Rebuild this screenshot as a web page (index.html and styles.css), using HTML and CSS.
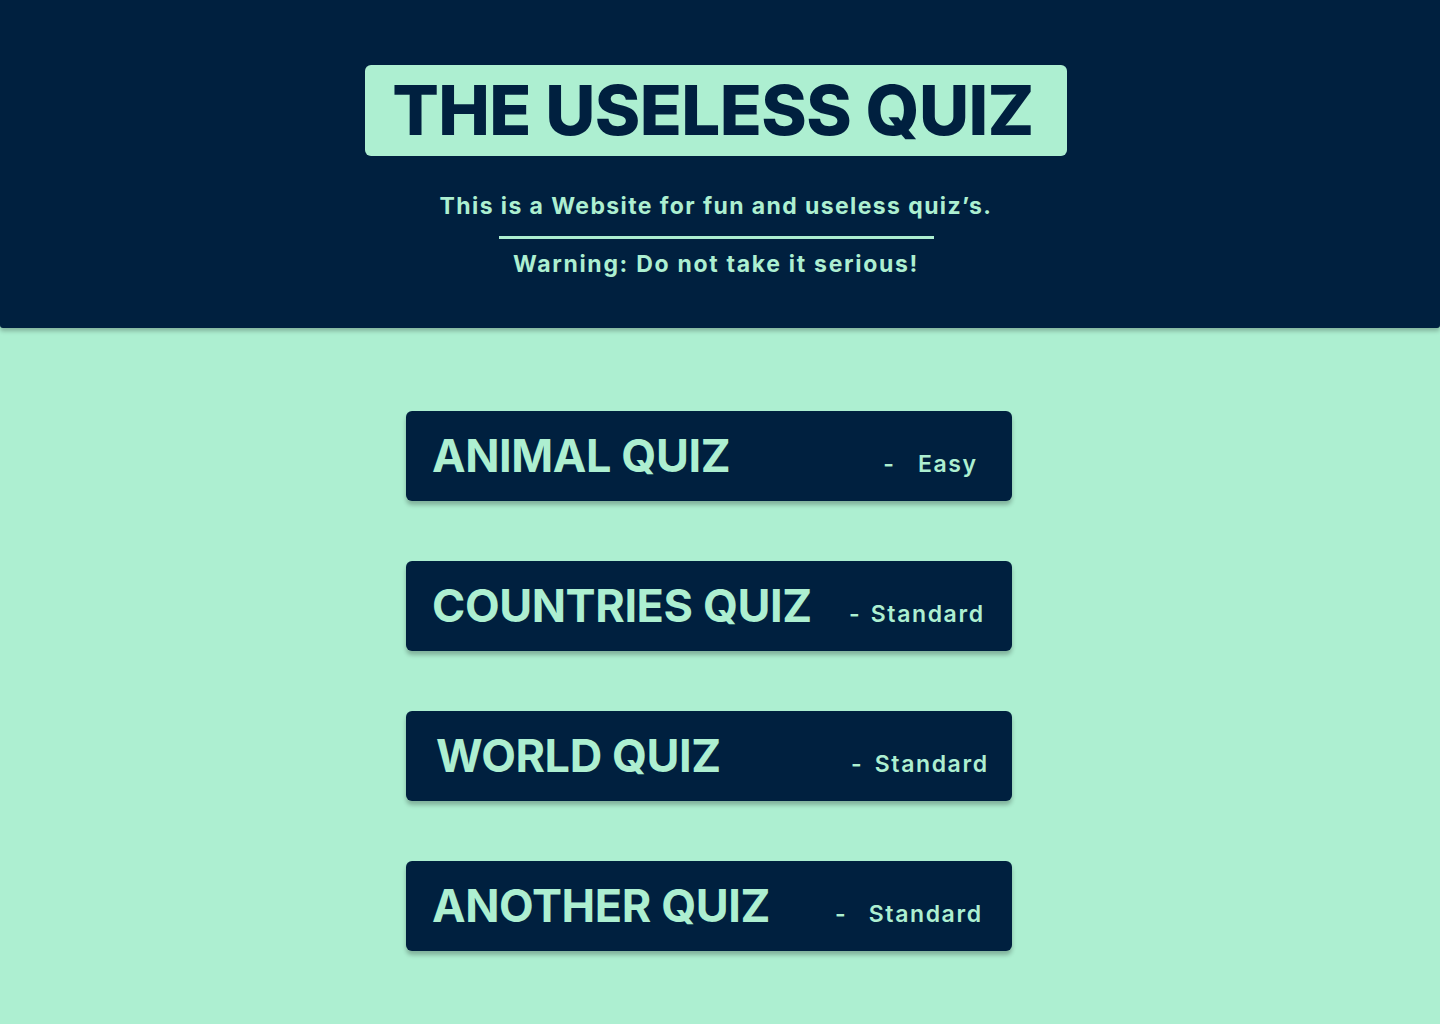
FILE: index.html
```html
<!DOCTYPE html>
<html lang="en">
<head>
<meta charset="utf-8">
<title>The Useless Quiz</title>
<link rel="stylesheet" href="styles.css">
</head>
<body>
<header class="hero">
  <h1 class="hero-title">THE USELESS QUIZ</h1>
  <p class="hero-sub">This is a Website for fun and useless quiz’s.</p>
  <div class="hero-rule"></div>
  <p class="hero-warn">Warning: Do not take it serious!</p>
</header>
<main class="quiz-list">
  <a class="quiz-card quiz-card--animal" href="#">
    <span class="quiz-name">ANIMAL QUIZ</span>
    <span class="quiz-level"><span class="quiz-dash">-</span><span class="quiz-diff">Easy</span></span>
  </a>
  <a class="quiz-card quiz-card--countries" href="#">
    <span class="quiz-name">COUNTRIES QUIZ</span>
    <span class="quiz-level"><span class="quiz-dash">-</span><span class="quiz-diff">Standard</span></span>
  </a>
  <a class="quiz-card quiz-card--world" href="#">
    <span class="quiz-name">WORLD QUIZ</span>
    <span class="quiz-level"><span class="quiz-dash">-</span><span class="quiz-diff">Standard</span></span>
  </a>
  <a class="quiz-card quiz-card--another" href="#">
    <span class="quiz-name">ANOTHER QUIZ</span>
    <span class="quiz-level"><span class="quiz-dash">-</span><span class="quiz-diff">Standard</span></span>
  </a>
</main>
</body>
</html>
```
FILE: styles.css
```css
* { box-sizing: border-box; }

html, body {
  margin: 0;
  padding: 0;
}

body {
  background: #adefd1;
  font-family: "Inter", "Open Sans", sans-serif;
  color: #00203f;
  min-height: 1024px;
}

.hero {
  background: #00203f;
  height: 328px;
  padding-top: 65px;
  padding-right: 8px;
  display: flex;
  flex-direction: column;
  align-items: center;
  box-shadow: 0 3px 4px rgba(0, 0, 0, 0.25);
  border-radius: 0 0 3px 3px;
  position: relative;
  z-index: 1;
}

.hero-title {
  margin: 0;
  background: #adefd1;
  color: #00203f;
  height: 91px;
  width: 702px;
  border-radius: 6px;
  font-size: 69px;
  font-weight: 800;
  line-height: 91px;
  text-align: center;
  letter-spacing: -0.6px;
  padding-right: 6px;
}

.hero-sub,
.hero-warn {
  margin: 0;
  color: #adefd1;
  font-size: 23px;
  font-weight: 700;
  line-height: 30px;
}

.hero-sub {
  margin-top: 35px;
  letter-spacing: 1.4px;
}

.hero-rule {
  width: 435px;
  height: 3px;
  background: #adefd1;
  margin-top: 15px;
}

.hero-warn {
  margin-top: 10px;
  letter-spacing: 1.7px;
}

.quiz-list {
  display: flex;
  flex-direction: column;
  align-items: center;
  gap: 60px;
  padding-top: 83px;
  padding-right: 22px;
}

.quiz-card {
  display: flex;
  align-items: baseline;
  width: 606px;
  height: 90px;
  padding: 0 29px 0 26px;
  background: #00203f;
  color: #adefd1;
  border-radius: 6px;
  box-shadow: 0 4px 4px rgba(0, 0, 0, 0.25);
  text-decoration: none;
  line-height: 90px;
}

.quiz-name {
  font-size: 45px;
  font-weight: 700;
  letter-spacing: -0.4px;
}

.quiz-level {
  margin-left: auto;
  font-size: 23px;
  font-weight: 600;
  display: flex;
  align-items: baseline;
}

.quiz-diff {
  letter-spacing: 1.6px;
  margin-right: -1.6px;
}

.quiz-card--animal { padding-right: 36px; }
.quiz-card--animal .quiz-dash { margin-right: 24px; }

.quiz-card--countries { padding-right: 29px; }
.quiz-card--countries .quiz-dash { margin-right: 11px; }

.quiz-card--world { padding-left: 30px; padding-right: 25px; }
.quiz-card--world .quiz-dash { margin-right: 13px; }

.quiz-card--another { padding-right: 31px; }
.quiz-card--another .quiz-dash { margin-right: 23px; }
```
